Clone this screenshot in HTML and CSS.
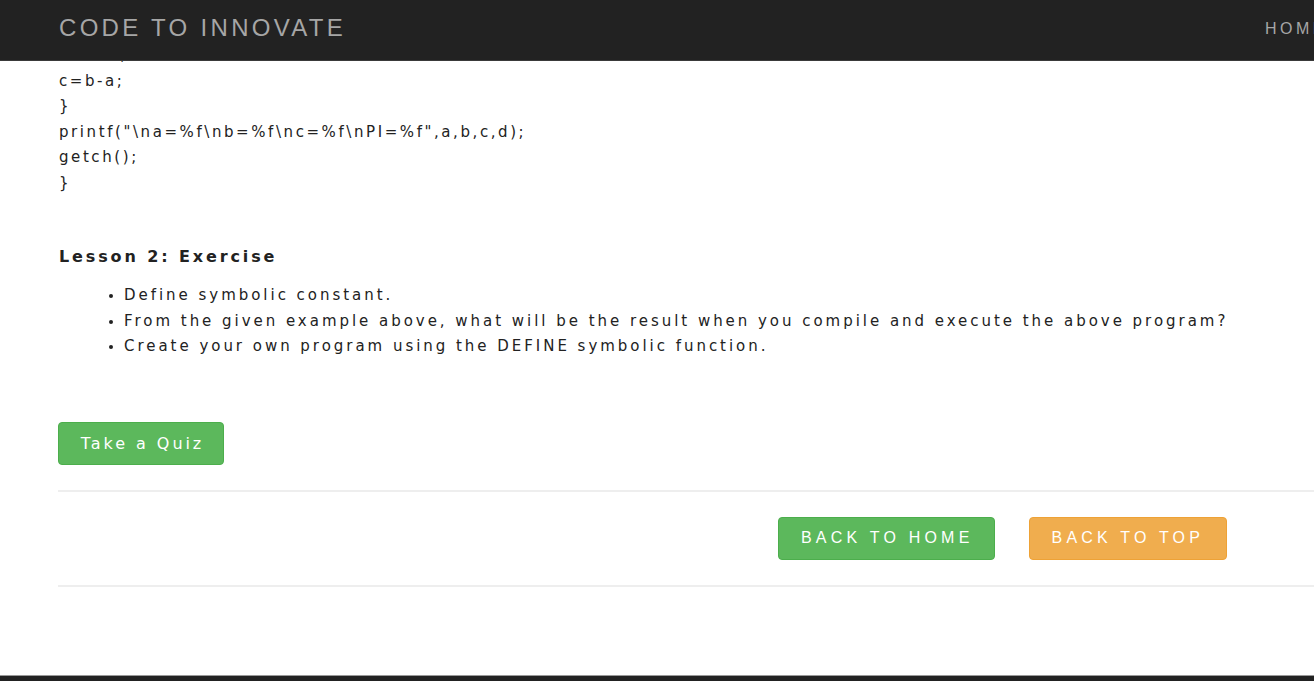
FILE: index.html
```html
<!DOCTYPE html>
<html>
<head>
<meta charset="utf-8">
<title>Code to Innovate</title>
<link rel="stylesheet" href="styles.css">
</head>
<body>
<nav class="navbar">
  <div class="nav-inner">
    <a class="brand" href="#">CODE TO INNOVATE</a>
    <ul class="nav-links">
      <li><a href="#">HOME</a></li>
      <li><a href="#">LESSONS</a></li>
    </ul>
  </div>
</nav>
<main class="container">
  <div class="code">
    <div>d=a*b;</div>
    <div>c=b-a;</div>
    <div>}</div>
    <div>printf("\na=%f\nb=%f\nc=%f\nPI=%f",a,b,c,d);</div>
    <div>getch();</div>
    <div>}</div>
  </div>
  <h4 class="lesson-title">Lesson 2: Exercise</h4>
  <ul class="exercise">
    <li>Define symbolic constant.</li>
    <li>From the given example above, what will be the result when you compile and execute the above program?</li>
    <li>Create your own program using the DEFINE symbolic function.</li>
  </ul>
  <a class="btn btn-success btn-quiz" href="#">Take a Quiz</a>
  <hr class="rule">
  <div class="bottom-actions">
    <a class="btn btn-success btn-nav" href="#">BACK TO HOME</a>
    <a class="btn btn-warning btn-nav" href="#">BACK TO TOP</a>
  </div>
  <hr class="rule rule-last">
</main>
<footer class="footer"></footer>
</body>
</html>
```

FILE: styles.css
```css
html, body {
  margin: 0;
  padding: 0;
  overflow: hidden;
  height: 681px;
}
body {
  font-family: "DejaVu Sans", "Liberation Sans", Arial, sans-serif;
  color: #222;
  background: #fff;
  position: relative;
}
.navbar {
  position: fixed;
  top: 0;
  left: 0;
  width: 1500px;
  height: 60px;
  background: #222;
  border-bottom: 1px solid #3a3a3a;
  z-index: 10;
}
.nav-inner {
  display: flex;
  align-items: center;
  height: 100%;
  padding-left: 59px;
}
.brand {
  font-family: "Liberation Sans", Arial, sans-serif;
  color: #a6a6a6;
  text-decoration: none;
  font-size: 24px;
  letter-spacing: 3.3px;
  margin-top: -5px;
}
.nav-links {
  list-style: none;
  margin: 0;
  padding: 0;
  display: flex;
  gap: 30px;
  position: absolute;
  left: 1265px;
  top: 19px;
}
.nav-links a {
  font-family: "Liberation Sans", Arial, sans-serif;
  color: #a6a6a6;
  text-decoration: none;
  font-size: 16px;
  letter-spacing: 3.5px;
}
.container {
  width: 1300px;
  padding-left: 58px;
  padding-top: 43px;
}
.code {
  font-size: 15px;
  line-height: 25.5px;
  letter-spacing: 2.58px;
  color: #222;
  padding-left: 1px;
}
.lesson-title {
  font-size: 16px;
  font-weight: bold;
  letter-spacing: 2.88px;
  margin: 48px 0 0 1px;
  line-height: 26px;
}
.exercise {
  margin: 13px 0 0 0;
  padding-left: 66px;
  font-size: 15px;
  line-height: 25.5px;
  letter-spacing: 2.97px;
  color: #222;
}
.exercise li::marker {
  font-size: 13px;
}
.btn {
  display: inline-flex;
  align-items: center;
  justify-content: center;
  color: #fff;
  text-decoration: none;
  border-radius: 4px;
  box-sizing: border-box;
}
.btn-success {
  background: #5cb85c;
  border: 1px solid #4cae4c;
}
.btn-warning {
  background: #f0ad4e;
  border: 1px solid #eea236;
}
.btn-quiz {
  margin-top: 62px;
  width: 166px;
  height: 43px;
  font-size: 16px;
  letter-spacing: 2.95px;
  padding-left: 3px;
}
.rule {
  border: 0;
  border-top: 2px solid #eee;
  margin: 25px 0 0 0;
}
.bottom-actions {
  display: flex;
  gap: 34px;
  padding-left: 720px;
  margin-top: 25px;
}
.btn-nav {
  font-family: "Liberation Sans", Arial, sans-serif;
  height: 43px;
  padding: 0 20px 0 22px;
  font-size: 16px;
  letter-spacing: 4.2px;
}
.btn-warning.btn-nav {
  padding-right: 22px;
}
.rule-last {
  margin-top: 25px;
}
.footer {
  position: absolute;
  left: 0;
  top: 675px;
  width: 100%;
  height: 6px;
  background: #222;
  border-top: 1px solid #999;
}
```
